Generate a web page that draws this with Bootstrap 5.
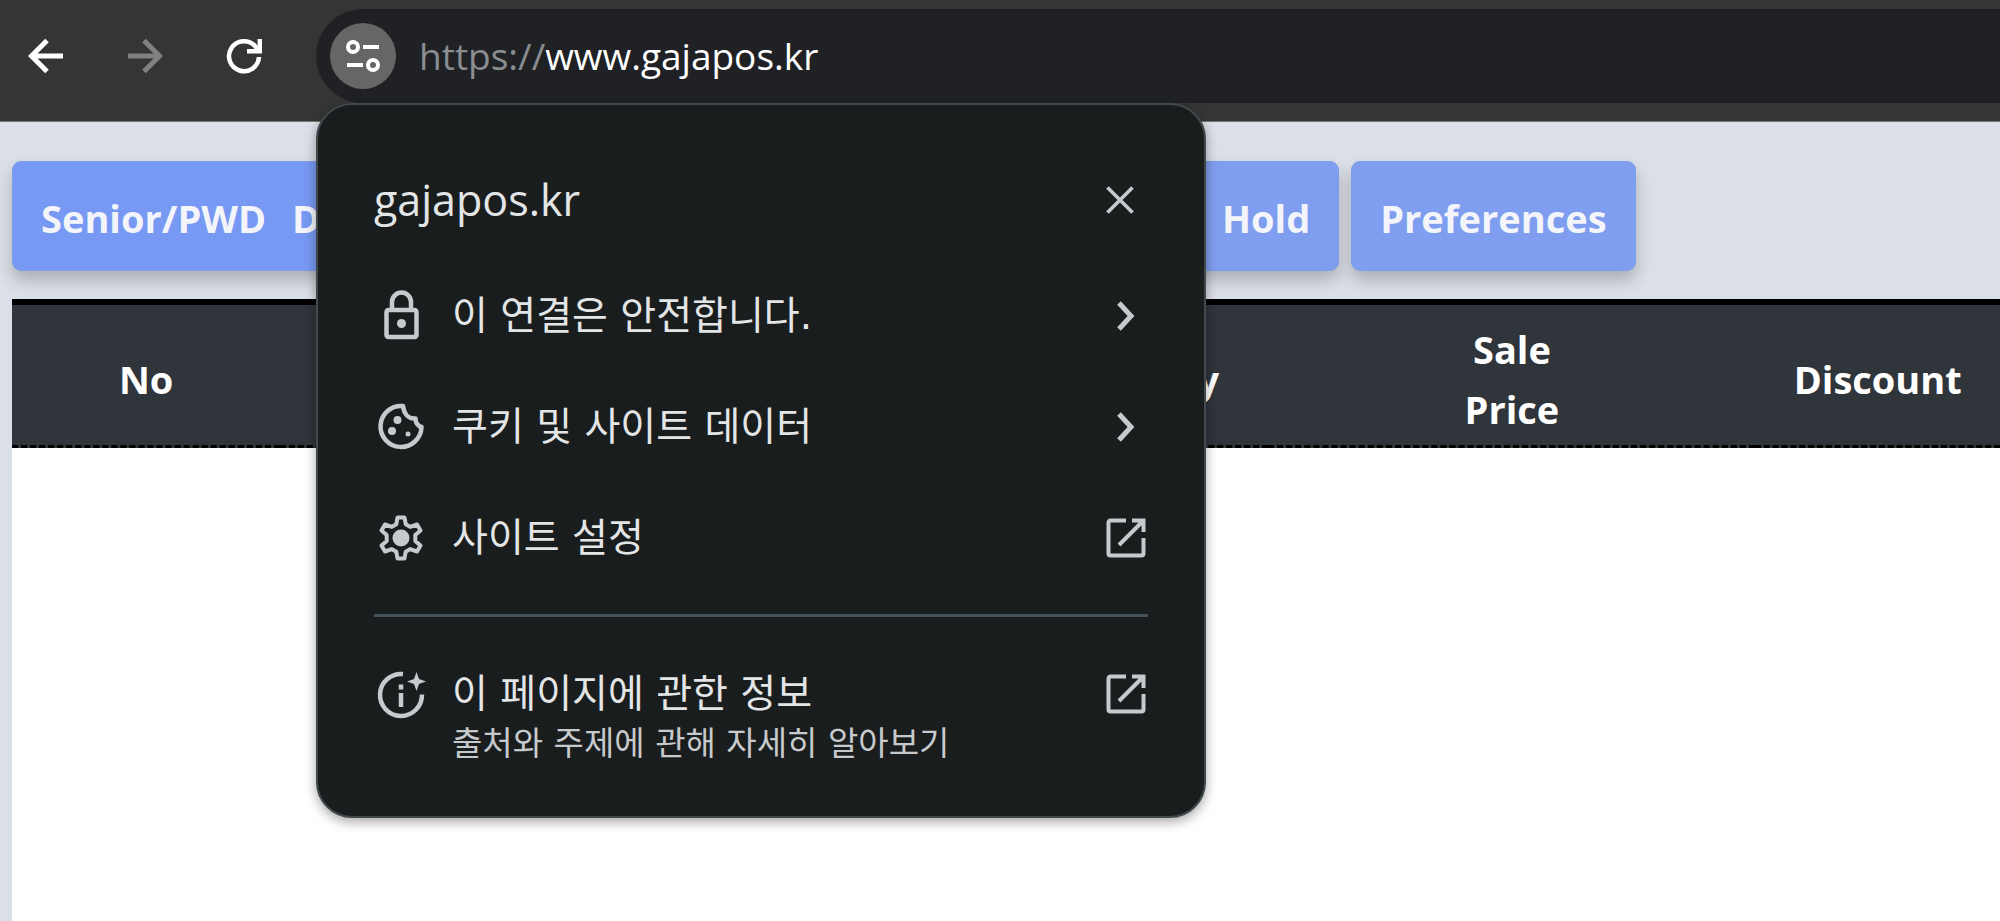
<!DOCTYPE html>
<html lang="ko">
<head>
<meta charset="utf-8">
<meta name="viewport" content="width=device-width, initial-scale=1">
<title>gajapos.kr</title>
<link rel="stylesheet" href="https://cdn.jsdelivr.net/npm/bootstrap@5.3.0/dist/css/bootstrap.min.css">
<script src="https://cdn.jsdelivr.net/npm/bootstrap@5.3.0/dist/js/bootstrap.bundle.min.js"></script>
<style>
  body { font-family: "Open Sans", "Noto Sans CJK KR", sans-serif; background: #dbdfe7; overflow: hidden; }
  svg { display: block; flex: none; }

  /* browser bar */
  .browser-bar { background: #353535; height: 122px; padding: 9px 0 19px 14px; border-bottom: 1px solid #777; }
  .tool-btn { width: 64px; height: 64px; padding: 0; border: 0; background: none; color: #fff; }
  .tool-btn:disabled { color: #808080; }
  .tool-set { gap: 35px; margin-right: 40px; }
  .omnibox { background: #202124; height: 94px; padding-left: 14px; gap: 23px; border-radius: 47px 0 0 47px; font-size: 37px; line-height: 50px; color: #8a8d91; }
  .omnibox b { font-weight: 500; color: #fff; }
  .site-btn { width: 66px; height: 66px; padding: 0; border: 0; background: #666; color: #fff; }

  /* site information menu */
  .site-menu { top: 103px; left: 316px; width: 890px; z-index: 10; padding: 34px 56px 50px; background: #1a1d1e; color: #e3e5e6; border: 2px solid #41494c; border-radius: 36px; box-shadow: 0 4px 12px rgba(0,0,0,.35); font-family: "DejaVu Sans", "Noto Sans CJK KR", sans-serif; }
  .site-title { height: 121px; }
  .site-title h1 { font: 400 43px/60px "Open Sans", sans-serif; }
  .menu-row { width: 100%; height: 111px; gap: 24px; padding: 0 2px 0 0; border: 0; background: none; color: inherit; font-size: 39px; line-height: 56px; text-align: left; text-decoration: none; }
  .menu-row.about { height: auto; align-items: flex-start; }
  .menu-row svg, .site-title svg { color: #c7cacc; }
  .menu-row small { display: block; font-size: 33px; line-height: 44px; color: #c7cacc; }
  .site-menu hr { height: 3px; margin: 21px 0 49px; border: 0; background: #44535a; opacity: 1; }
  .close-btn { padding: 0 6px; border: 0; background: none; }

  /* point of sale page */
  .pos-page { margin-left: 12px; }
  .pos-actions { padding: 39px 0 28px; gap: 12px; }
  .lead-group { flex: 0 0 1169px; }
  .pos-btn { height: 110px; padding: 3px 28px 0; background: #7f9ef0; border: 1px solid #7ca0e6; border-radius: 9px; color: #f3f5fa; font-size: 38px; line-height: 56px; font-weight: 700; box-shadow: 0 9px 16px rgba(0,0,0,.22); white-space: nowrap; }
  .pos-btn.primary { background: #7799f3; }
  .pos-table { table-layout: fixed; width: 100%; margin: 0; border-collapse: separate; border-spacing: 0; }
  .pos-table th { height: 149px; padding: 9px 0 2px; background: #30343b; color: #fff; border-top: 6px solid #000; border-bottom: 3px dashed #000; font-size: 38px; line-height: 60px; font-weight: 700; text-align: center; vertical-align: middle; }
</style>
</head>
<body class="d-flex flex-column vh-100 position-relative">

<header class="browser-bar d-flex align-items-center">
  <div class="tool-set d-flex">
    <button class="tool-btn d-flex align-items-center justify-content-center" type="button" aria-label="뒤로">
      <svg width="36" height="36" viewBox="0 0 36 36" fill="none" stroke="currentColor" stroke-width="5"><path d="M35 18H5M19 2.500L3.500 18L19 33.500"/></svg>
    </button>
    <button class="tool-btn d-flex align-items-center justify-content-center" type="button" aria-label="앞으로" disabled>
      <svg width="36" height="36" viewBox="0 0 36 36" fill="none" stroke="currentColor" stroke-width="5"><path d="M1 18H31M17 2.500L32.500 18L17 33.500"/></svg>
    </button>
    <button class="tool-btn d-flex align-items-center justify-content-center" type="button" aria-label="새로고침">
      <svg width="36" height="36" viewBox="0 0 36 36" fill="none" stroke="currentColor" stroke-width="4.500"><path d="M33 19A15 15 0 1 1 29 8L32 12"/><path d="M33.800 1V13.200H21"/></svg>
    </button>
  </div>
  <div class="omnibox d-flex align-items-center flex-grow-1">
    <button class="site-btn rounded-circle d-flex align-items-center justify-content-center" type="button" aria-label="사이트 정보 보기">
      <svg width="36" height="36" viewBox="0 0 36 36" fill="none" stroke="currentColor" stroke-width="4"><circle cx="8" cy="9" r="5"/><path d="M18 9H34M2 27H18"/><circle cx="28" cy="27" r="5"/></svg>
    </button>
    <div role="textbox" aria-label="주소">https://<b>www.gajapos.kr</b></div>
  </div>
</header>

<main class="pos-page d-flex flex-column flex-grow-1">
  <div class="pos-actions d-flex">
    <div class="lead-group">
      <button class="pos-btn primary" type="button">Senior/PWD <span class="ms-3">Discount</span></button>
    </div>
    <button class="pos-btn" type="button">Hold</button>
    <button class="pos-btn" type="button">Preferences</button>
  </div>
  <div class="bg-white flex-grow-1">
    <table class="pos-table">
      <colgroup><col style="width:13.500%"><col style="width:41.300%"><col style="width:8.400%"><col style="width:24.500%"><col style="width:12.300%"></colgroup>
      <thead><tr><th scope="col">No</th><th></th><th scope="col">Qty</th><th scope="col">Sale<br>Price</th><th scope="col">Discount</th></tr></thead>
    </table>
  </div>
</main>

<section class="site-menu position-absolute" aria-label="사이트 정보">
  <div class="site-title d-flex align-items-center justify-content-between">
    <h1 class="m-0">gajapos.kr</h1>
    <button class="close-btn me-2" type="button" aria-label="닫기">
      <svg width="28" height="28" viewBox="0 0 28 28" fill="none" stroke="currentColor" stroke-width="3.600"><path d="M1.500 1.500L26.500 26.500M26.500 1.500L1.500 26.500"/></svg>
    </button>
  </div>
  <button class="menu-row d-flex align-items-center" type="button">
    <svg width="54" height="54" viewBox="0 0 54 54" fill="none" stroke="currentColor" stroke-width="4.500"><rect x="12.500" y="21" width="30" height="27" rx="2"/><path d="M18 21V13a9.500 9.500 0 0 1 19 0V21"/><circle cx="27.500" cy="34.500" r="4.500" fill="currentColor" stroke="none"/></svg>
    <span class="flex-grow-1">이 연결은 안전합니다.</span>
    <svg width="30" height="30" viewBox="0 0 30 30" fill="none" stroke="currentColor" stroke-width="5"><path d="M3 2L15 15L3 28"/></svg>
  </button>
  <button class="menu-row d-flex align-items-center" type="button">
    <svg width="54" height="54" viewBox="0 0 54 54" fill="none" stroke="currentColor" stroke-width="4.500" stroke-linejoin="round"><path d="M29 6A20.500 20.500 0 1 0 47.500 27C43 25.500 41.500 22.500 41.500 18.500C35 19 30 14.500 29 6Z"/><g fill="currentColor" stroke="none"><circle cx="23.500" cy="20" r="4"/><circle cx="18" cy="31" r="4"/><circle cx="34" cy="34" r="2.500"/></g></svg>
    <span class="flex-grow-1">쿠키 및 사이트 데이터</span>
    <svg width="30" height="30" viewBox="0 0 30 30" fill="none" stroke="currentColor" stroke-width="5"><path d="M3 2L15 15L3 28"/></svg>
  </button>
  <a class="menu-row d-flex align-items-center" href="#settings">
    <svg width="54" height="54" viewBox="0 0 54 54" fill="none" stroke="currentColor" stroke-width="4" stroke-linejoin="round"><path d="M23.500 6.500H30.500L31.700 13.200L36.200 15.900L43 13.500L46.500 19.500L41.300 24V30L46.500 34.500L43 40.500L36.200 38.100L31.700 40.800L30.500 47.500H23.500L22.300 40.800L17.800 38.100L11 40.500L7.500 34.500L12.700 30V24L7.500 19.500L11 13.500L17.800 15.900L22.300 13.200Z"/><circle cx="27" cy="27" r="8.500" fill="currentColor" stroke="none"/></svg>
    <span class="flex-grow-1">사이트 설정</span>
    <svg width="40" height="40" viewBox="0 0 40 40" fill="none" stroke="currentColor" stroke-width="4"><path d="M20 2.500H4.500a2 2 0 0 0-2 2V35.500a2 2 0 0 0 2 2H35.500a2 2 0 0 0 2-2V20M26 2.500H37.500V14M37 3L13 27"/></svg>
  </a>
  <hr>
  <a class="menu-row about d-flex" href="#about">
    <svg width="54" height="54" viewBox="0 0 54 54" fill="none" stroke="currentColor" stroke-width="4.500"><path d="M29 8A21 21 0 1 0 48 28.500"/><path d="M27 27V41M27 18.500V23.500"/><path d="M42.500 6L45 13L52 15.500L45 18L42.500 25L40 18L33 15.500L40 13Z" fill="currentColor" stroke="none"/></svg>
    <span class="flex-grow-1">이 페이지에 관한 정보<small>출처와 주제에 관해 자세히 알아보기</small></span>
    <svg class="mt-2" width="40" height="40" viewBox="0 0 40 40" fill="none" stroke="currentColor" stroke-width="4"><path d="M20 2.500H4.500a2 2 0 0 0-2 2V35.500a2 2 0 0 0 2 2H35.500a2 2 0 0 0 2-2V20M26 2.500H37.500V14M37 3L13 27"/></svg>
  </a>
</section>

</body>
</html>
